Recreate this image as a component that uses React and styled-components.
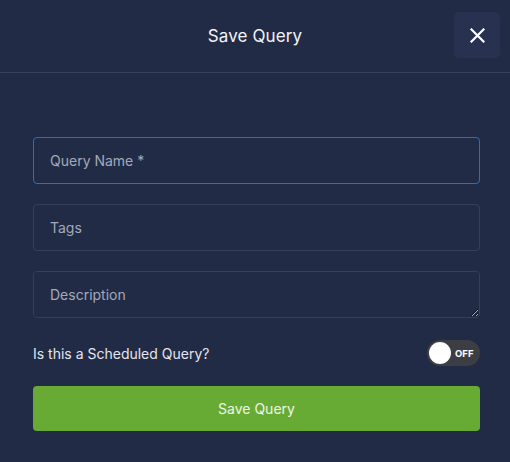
import React from "react";
import styled, { createGlobalStyle } from "styled-components";

const Global = createGlobalStyle`
  html, body { margin: 0; padding: 0; background: #222b45; }
  body { font-family: "Inter", "Lato", "Liberation Sans", sans-serif; }
  * { box-sizing: border-box; }
`;

const Modal = styled.div`
  width: 510px;
  height: 462px;
  background: #222b45;
  display: flex;
  flex-direction: column;
`;

const Header = styled.div`
  height: 73px;
  display: grid;
  grid-template-columns: 1fr auto 1fr;
  align-items: center;
  padding: 0 10px 1px 10px;
  border-bottom: 1px solid #34405e;
`;

const Title = styled.h2`
  grid-column: 2;
  margin: 0;
  font-size: 17px;
  font-weight: 400;
  color: #f3f4f8;
  letter-spacing: 0.1px;
`;

const CloseButton = styled.button`
  grid-column: 3;
  justify-self: end;
  width: 46px;
  height: 46px;
  margin-top: -1px;
  border: none;
  border-radius: 5px;
  background: #28314f;
  color: #ffffff;
  display: flex;
  align-items: center;
  justify-content: center;
  padding: 0;
  cursor: pointer;
`;

const Form = styled.form`
  display: flex;
  flex-direction: column;
  padding: 64px 30px 0 33px;
`;

const Fields = styled.div`
  display: flex;
  flex-direction: column;
  gap: 20px;
`;

const Input = styled.input`
  width: 100%;
  height: 47px;
  background: #222b45;
  border: 1px solid ${(p) => (p.$focused ? "#2d6cc0" : "#343f5c")};
  border-radius: 4px;
  padding: 0 16px;
  font-family: inherit;
  font-size: 14px;
  color: #e6e8ee;
  outline: none;
  &::placeholder { color: #a3a9ba; }
`;

const TextArea = styled.textarea`
  width: 100%;
  height: 47px;
  background: #222b45;
  border: 1px solid #343f5c;
  border-radius: 4px;
  padding: 14px 16px;
  font-family: inherit;
  font-size: 14px;
  line-height: 18px;
  color: #e6e8ee;
  outline: none;
  resize: vertical;
  display: block;
  &::placeholder { color: #a3a9ba; }
`;

const ToggleRow = styled.div`
  display: flex;
  align-items: center;
  justify-content: space-between;
  margin-top: 22px;
  height: 26px;
`;

const ToggleLabel = styled.span`
  font-size: 14px;
  color: #e3e6ee;
`;

const Toggle = styled.div`
  width: 53px;
  height: 26px;
  border-radius: 13px;
  background: #3d3e44;
  display: flex;
  align-items: center;
  padding: 0 2px;
  gap: 4px;
`;

const Knob = styled.span`
  width: 22px;
  height: 22px;
  border-radius: 50%;
  background: #ffffff;
`;

const ToggleText = styled.span`
  font-size: 9.5px;
  font-weight: 700;
  color: #ffffff;
`;

const SaveButton = styled.button`
  margin-top: 20px;
  height: 45px;
  width: 100%;
  border: none;
  border-radius: 4px;
  background: #67ab34;
  color: #eef6e6;
  font-family: inherit;
  font-size: 14px;
`;

export default function App() {
  return (
    <>
      <Global />
      <Modal>
        <Header>
          <Title>Save Query</Title>
          <CloseButton aria-label="Close">
            <svg width="15" height="15" viewBox="0 0 15 15">
              <path d="M1.5 1.5 L13.5 13.5 M13.5 1.5 L1.5 13.5" stroke="#ffffff" strokeWidth="2.2" strokeLinecap="square" />
            </svg>
          </CloseButton>
        </Header>
        <Form>
          <Fields>
            <Input $focused placeholder="Query Name *" />
            <Input placeholder="Tags" />
            <TextArea placeholder="Description" />
          </Fields>
          <ToggleRow>
            <ToggleLabel>Is this a Scheduled Query?</ToggleLabel>
            <Toggle>
              <Knob />
              <ToggleText>OFF</ToggleText>
            </Toggle>
          </ToggleRow>
          <SaveButton type="button">Save Query</SaveButton>
        </Form>
      </Modal>
    </>
  );
}
